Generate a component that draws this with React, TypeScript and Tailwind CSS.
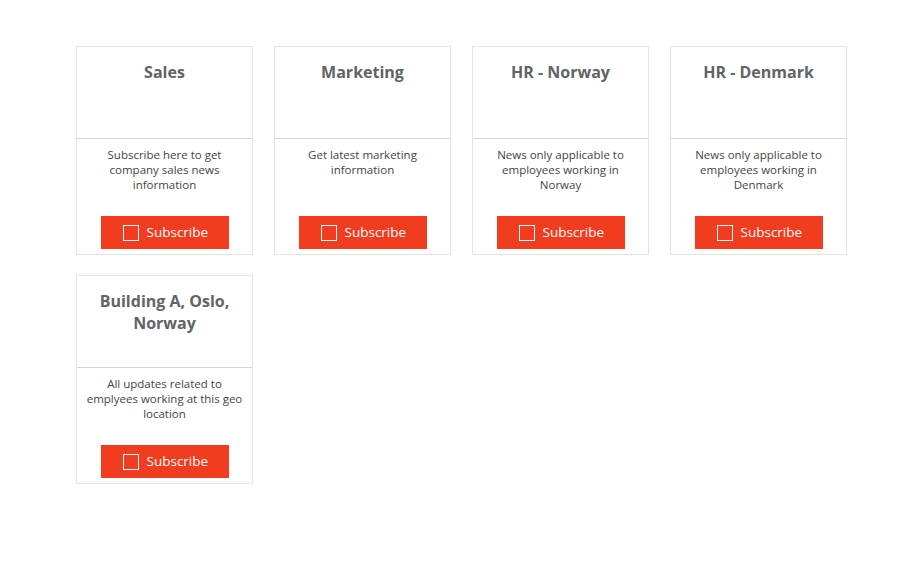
import React from "react";

const channels = [
	{ title: "Sales", text: "Subscribe here to get company sales news information" },
	{ title: "Marketing", text: "Get latest marketing information" },
	{ title: "HR - Norway", text: "News only applicable to employees working in Norway" },
	{ title: "HR - Denmark", text: "News only applicable to employees working in Denmark" },
	{ title: "Building A, Oslo, Norway", text: "All updates related to emplyees working at this geo location" },
];

function Card({ title, text }: { title: string; text: string }) {
	return (
		<div className="flex h-[209px] w-[177px] flex-col border border-[#e4e4e4] bg-white">
			<div className="h-[92px] border-b border-[#d6d6d6] px-5 pt-[14px] text-center text-[16px] font-bold leading-[22px] text-[#5f6466]">
				{title}
			</div>
			<div className="px-2 pt-[8px] text-center text-[11.5px] leading-[15px] text-[#444]">{text}</div>
			<button className="mx-auto mb-[5px] mt-auto flex h-[33px] w-[128px] items-center bg-[#f03c1f] pl-[22px] text-[13.5px] text-white">
				<span className="mr-[8px] inline-block h-[16px] w-[16px] border border-white" />
				Subscribe
			</button>
		</div>
	);
}

export default function App() {
	return (
		<div className="min-h-[579px] bg-white pl-[76px] pt-[46px]" style={{ fontFamily: '"Open Sans", "Noto Sans", sans-serif' }}>
			<div className="grid w-fit grid-cols-[repeat(4,177px)] gap-x-[21px] gap-y-[20px]">
				{channels.map((c) => (
					<Card key={c.title} title={c.title} text={c.text} />
				))}
			</div>
		</div>
	);
}
